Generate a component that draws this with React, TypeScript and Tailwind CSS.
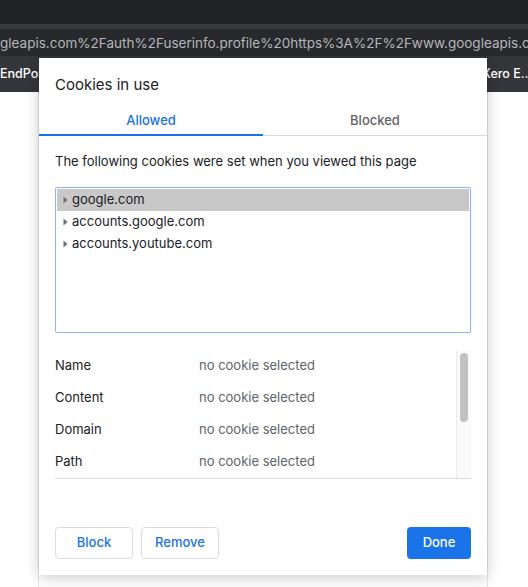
const font = { fontFamily: "Inter, 'Noto Sans', sans-serif" };

const treeItems = ["google.com", "accounts.google.com", "accounts.youtube.com"];

const details = [
  "Name",
  "Content",
  "Domain",
  "Path",
  "Send for",
  "Accessible to script",
  "Created",
  "Expires",
];

function Caret() {
  return (
    <svg width="5" height="8" viewBox="0 0 5 8" className="shrink-0">
      <path d="M0.5 0.5 L4.5 4 L0.5 7.5 Z" fill="#6f6f6f" />
    </svg>
  );
}

function CookiesDialog() {
  return (
    <div className="absolute left-[39px] top-[58px] flex h-[517px] w-[448px] flex-col bg-white text-[#202124] shadow-[0_2px_14px_rgba(0,0,0,0.22)]">
      <div className="px-4 pt-[17px] text-[15px] leading-5">Cookies in use</div>

      {/* tabs: the active one carries the blue rule, the rest sits on a hairline */}
      <div className="mt-[1px] flex h-[40px] items-end">
        <div className="flex flex-1 justify-center border-b-2 border-[#1a73e8] pb-[5px] text-[13px] font-medium leading-[18px] text-[#1a73e8]">
          Allowed
        </div>
        <div className="flex flex-1 justify-center border-b border-[#dadce0] pb-[6px] text-[13px] font-medium leading-[18px] text-[#5f6368]">
          Blocked
        </div>
      </div>

      <div className="px-4 pt-[16px] text-[13px] leading-[18px]">
        The following cookies were set when you viewed this page
      </div>

      <div className="mx-4 mt-[17px] h-[146px] rounded-[2px] border border-[#8ab4f8] p-px">
        {treeItems.map((item, i) => (
          <div
            key={item}
            className={
              "flex h-[22px] items-center gap-[4px] pl-[6px] text-[13px] " +
              (i === 0 ? "bg-[#c8c8c8]" : "")
            }
          >
            <Caret />
            <span>{item}</span>
          </div>
        ))}
      </div>

      <div className="relative mx-4 mt-[17px] h-[129px] overflow-hidden border-b border-[#dadce0]">
        {details.map((label) => (
          <div key={label} className="flex h-[32px] items-center text-[13px]">
            <span className="w-[144px] shrink-0">{label}</span>
            <span className="text-[#5f6368]">no cookie selected</span>
          </div>
        ))}
        {/* scrollbar sits over the rows, as the native one does */}
        <div className="absolute right-0 top-0 h-full w-[15px] border-l border-[#ececec] bg-[#fafafa]">
          <div className="ml-[3px] mt-[3px] h-[69px] w-[8px] rounded-full bg-[#c1c1c1]" />
        </div>
      </div>

      <div className="mt-auto flex items-center gap-2 px-4 pb-4 text-[13px] font-medium">
        <button className="h-[32px] w-[78px] rounded-[4px] border border-[#dadce0] text-[#1a73e8]">
          Block
        </button>
        <button className="h-[32px] w-[78px] rounded-[4px] border border-[#dadce0] text-[#1a73e8]">
          Remove
        </button>
        <button className="ml-auto h-[32px] w-[64px] rounded-[4px] bg-[#1a73e8] text-white">
          Done
        </button>
      </div>
    </div>
  );
}

export default function App() {
  return (
    <div className="relative flex h-[587px] w-[528px] flex-col overflow-hidden bg-white" style={font}>
      <div className="h-[24px] bg-[#202124]" />
      <div className="h-[5px] bg-[#3a3b3e]" />
      <div className="flex h-[27px] items-center overflow-hidden whitespace-nowrap bg-[#28292c] pt-[2px] text-[13.5px] text-[#b4b7bb]">
        gleapis.com%2Fauth%2Fuserinfo.profile%20https%3A%2F%2Fwww.googleapis.com%2Fauth
      </div>
      <div className="flex h-[36px] items-center justify-between overflow-hidden whitespace-nowrap bg-[#35363a] text-[12.5px] font-medium text-white">
        <span>EndPoint</span>
        <span className="w-[46px] overflow-hidden">Xero E…</span>
      </div>
      <div className="flex flex-1">
        <div className="ml-[38px] w-[450px] border-x border-[#e3e3e3]" />
      </div>
      <CookiesDialog />
    </div>
  );
}
